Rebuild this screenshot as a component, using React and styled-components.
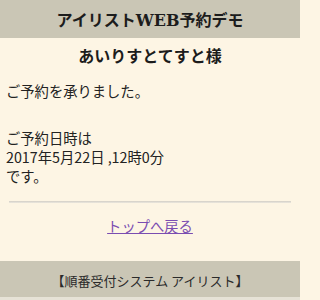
import React from "react";
import styled, { createGlobalStyle } from "styled-components";

const GlobalStyle = createGlobalStyle`
  html, body {
    margin: 0;
    padding: 0;
    background: #fdf5e4;
  }
  body {
    font-family: "Noto Sans CJK JP", sans-serif;
    color: #222;
  }
`;

const Page = styled.div`
  width: 300px;
  height: 300px;
  display: flex;
  flex-direction: column;
  background: #fdf5e4;
  overflow: hidden;
`;

const Header = styled.header`
  height: 38px;
  display: flex;
  align-items: center;
  justify-content: center;
  background: #cac6b5;

  h1 {
    margin: 0;
    font-family: "DejaVu Serif", "Noto Sans CJK JP", serif;
    font-size: 16px;
    font-weight: 700;
    color: #1c1c1c;
  }
`;

const Name = styled.h2`
  margin: 0;
  height: 34px;
  display: flex;
  align-items: center;
  justify-content: center;
  font-family: "DejaVu Serif", "Noto Sans CJK JP", serif;
  font-size: 16px;
  font-weight: 700;
  color: #1c1c1c;
`;

const Message = styled.div`
  padding: 9px 6px 0;
  font-size: 14.3px;
  color: #222;
`;

const Line = styled.div`
  height: 19px;
  line-height: 19px;
  margin-bottom: ${(p) => p.gap || 0}px;
`;

const Rule = styled.hr`
  margin: 16px 9px 0;
  border: 0;
  height: 2px;
  background: linear-gradient(to bottom, #d2cec6, #ece8df);
`;

const Back = styled.div`
  flex: 1;
  display: flex;
  justify-content: center;
  padding-top: 14px;

  a {
    font-size: 14.3px;
    line-height: 18px;
    color: #7a4db1;
    text-decoration: underline;
  }
`;

const Footer = styled.footer`
  height: 34px;
  padding-top: 2px;
  display: flex;
  align-items: center;
  justify-content: center;
  background: #cac6b5;
  border-bottom: 3px solid #e6e2d6;
  font-size: 13px;
  color: #2a2a2a;
`;

export default function App() {
  return (
    <Page>
      <GlobalStyle />
      <Header>
        <h1>アイリストWEB予約デモ</h1>
      </Header>
      <Name>あいりすとてすと様</Name>
      <Message>
        <Line gap={28}>ご予約を承りました。</Line>
        <Line>ご予約日時は</Line>
        <Line>2017年5月22日 ,12時0分</Line>
        <Line>です。</Line>
      </Message>
      <Rule />
      <Back>
        <a href="#top">トップへ戻る</a>
      </Back>
      <Footer>【順番受付システム アイリスト】</Footer>
    </Page>
  );
}
